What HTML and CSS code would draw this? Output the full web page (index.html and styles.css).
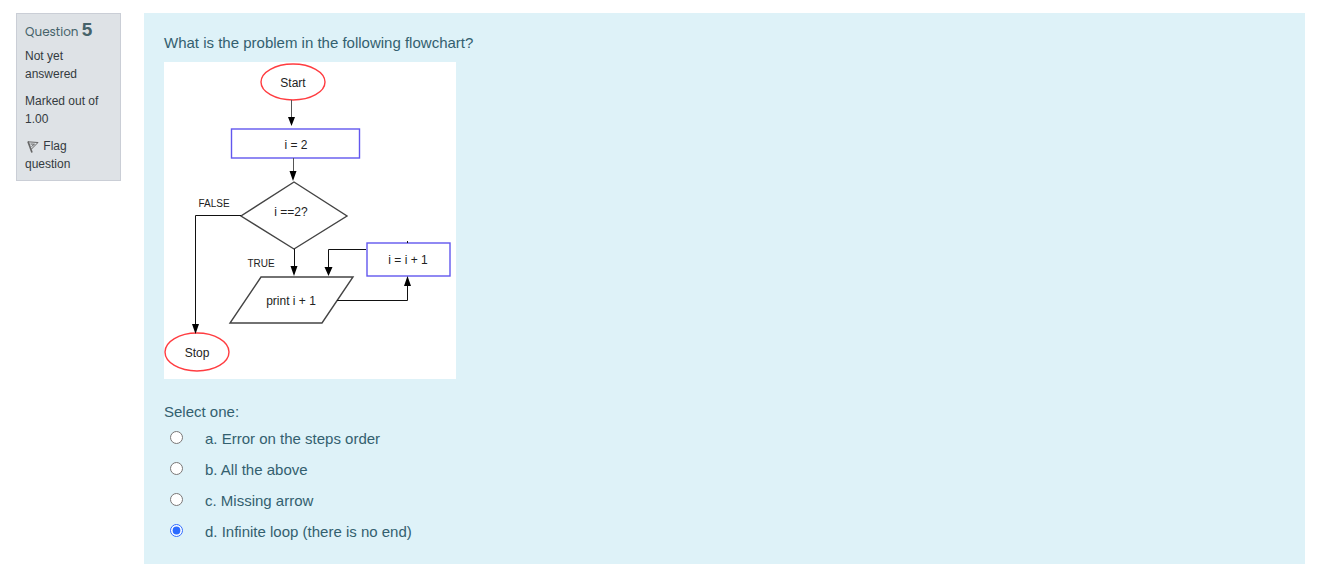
FILE: index.html
```html
<!DOCTYPE html>
<html lang="en">
<head>
<meta charset="utf-8">
<meta name="viewport" content="width=device-width, initial-scale=1">
<title>Question 5</title>
<link rel="stylesheet" href="styles.css">
</head>
<body>
<main class="question">
  <aside class="info">
    <h3 class="info-title">Question <span class="info-number">5</span></h3>
    <div class="info-item">Not yet answered</div>
    <div class="info-item">Marked out of 1.00</div>
    <a class="info-item flag" href="#flag"><svg class="flag-icon" viewBox="0 0 12 12" width="12" height="12" aria-hidden="true"><path d="M1 .5 5 11.500" stroke-width="1.700"/><path d="M1 .8 11 1.500 4.500 8M3.500 3 7.500 3.200 4.500 5.500" stroke-width="1"/></svg> Flag question</a>
  </aside>
  <form class="content">
    <p class="prompt">What is the problem in the following flowchart?</p>
    <svg class="chart" viewBox="0 0 292 317" width="292" height="317" role="img" aria-label="Flowchart">
      <rect class="paper" width="292" height="317"/>
      <g class="terminal">
        <ellipse cx="129" cy="20" rx="32" ry="18"/>
        <ellipse cx="33" cy="290" rx="32" ry="19"/>
      </g>
      <g class="process">
        <rect x="67.500" y="67" width="128" height="29"/>
        <rect x="203" y="181" width="83" height="33"/>
      </g>
      <g class="shape">
        <path d="M130 120 183 154 130 187 77 154Z"/>
        <path d="M97 215H189L158 261H66Z"/>
      </g>
      <path class="thin" d="M127.500 38V56M129.500 96V112"/>
      <path class="wire" d="M77 153.500H31.500V262M130.500 187V206M202 187.500H164.500V206M173 238.500H243.500V223M243.500 179V181"/>
      <path class="head" d="M124 55h7l-3.500 9zM125.500 109h7l-3.500 10zM28 262h7l-3.500 10zM126.500 204h7l-3.500 10zM160.500 205h8l-4 9zM240 224h7l-3.500-10z"/>
      <g class="label">
        <text x="129" y="25">Start</text>
        <text x="132" y="87">i = 2</text>
        <text x="127" y="154">i ==2?</text>
        <text x="127" y="243">print i + 1</text>
        <text x="244" y="202">i = i + 1</text>
        <text x="33" y="295">Stop</text>
      </g>
      <g class="label branch">
        <text x="50" y="145">FALSE</text>
        <text x="97" y="205">TRUE</text>
      </g>
    </svg>
    <fieldset class="answers">
      <legend class="legend">Select one:</legend>
      <div class="option"><input type="radio" name="answer" id="a"><label for="a">a. Error on the steps order</label></div>
      <div class="option"><input type="radio" name="answer" id="b"><label for="b">b. All the above</label></div>
      <div class="option"><input type="radio" name="answer" id="c"><label for="c">c. Missing arrow</label></div>
      <div class="option"><input type="radio" name="answer" id="d" checked><label for="d">d. Infinite loop (there is no end)</label></div>
    </fieldset>
  </form>
</main>
</body>
</html>
```
FILE: styles.css
```css
* {
  box-sizing: border-box;
}

body {
  margin: 0;
  background: #fff;
  font-family: "Liberation Sans", Arial, sans-serif;
  font-size: 15px;
  line-height: 23px;
  color: #33606f;
}

.question {
  display: grid;
  grid-template-columns: 105px 1fr;
  align-items: start;
  gap: 23px;
  padding: 13px 12px 19px 16px;
}

.info {
  padding: 7px 8px;
  border: 1px solid #caced6;
  background: #dee2e6;
  font-size: 12px;
  line-height: 18px;
  color: #343a40;
}

.info-title {
  margin: 0 0 6px;
  font-family: Poppins, Inter, sans-serif;
  font-size: 12px;
  font-weight: 400;
  line-height: 18px;
  color: #46626a;
}

.info-number {
  font-family: "Liberation Sans", Arial, sans-serif;
  font-size: 19px;
  font-weight: 700;
}

.info-item {
  display: block;
  margin-bottom: 9px;
}

.flag {
  margin-bottom: 0;
  color: inherit;
  text-decoration: none;
}

.flag-icon {
  margin: 0 1px 0 2px;
  vertical-align: -3px;
  fill: none;
  stroke: #666;
}

.content {
  padding: 18px 20px 17px;
  background: #def2f8;
}

.prompt {
  margin: 0 0 8px;
}

.chart {
  display: block;
  margin-bottom: 21px;
}

.paper {
  fill: #fff;
}

.terminal,
.process,
.shape,
.thin,
.wire {
  fill: none;
  stroke-width: 1.4px;
}

.terminal {
  stroke: #ff3c40;
}

.process {
  stroke: #6257ee;
}

.shape {
  stroke: #444;
}

.thin {
  stroke: #555;
  stroke-width: 1px;
}

.wire {
  stroke: #111;
  stroke-width: 1px;
}

.head {
  fill: #000;
}

.label {
  font-size: 12px;
  text-anchor: middle;
  fill: #222;
}

.branch {
  font-size: 10px;
}

.answers {
  min-width: 0;
  margin: 0;
  padding: 0;
  border: 0;
}

.legend {
  padding: 0;
}

.option {
  display: flex;
  align-items: flex-start;
  gap: 22px;
  padding: 4px 0 4px 6px;
}

.option input {
  width: 13px;
  height: 13px;
  margin: 4px 0 0;
  accent-color: #2c6bff;
}
```
